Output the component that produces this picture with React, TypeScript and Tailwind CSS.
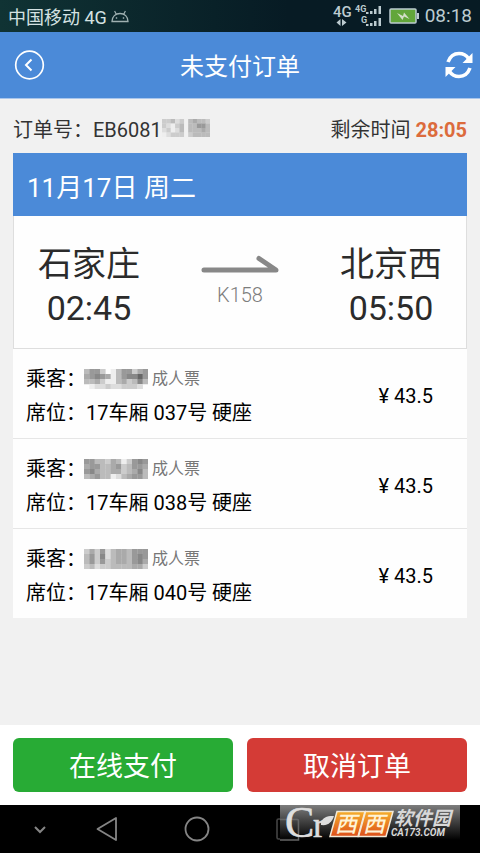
import React from 'react'

type Passenger = {
  seat: string
  price: string
  mask: string[]
}

const passengers: Passenger[] = [
  {
    seat: '17车厢 037号 硬座',
    price: '43.5',
    mask: ['b99cfeb99ca9', 'a989aeb98869', 'bbaceebacb8b', 'feddcddcccdf'],
  },
  {
    seat: '17车厢 038号 硬座',
    price: '43.5',
    mask: ['99bbcabec989', 'a99bba9cb99a', '98abbaacba8b', 'ba9bbedba99b'],
  },
  {
    seat: '17车厢 040号 硬座',
    price: '43.5',
    mask: ['cac9dbaab999', 'b9c8dbaab989', 'b9c9cbaab98a', 'cbdccbbbbaac'],
  },
]

// Each character is one grey block, 0 is black and f is left empty
const Mosaic = ({
  rows,
  className,
}: {
  rows: string[]
  className: string
}) => (
  <svg
    viewBox={`0 0 ${rows[0].length} ${rows.length}`}
    preserveAspectRatio="none"
    className={className}
    aria-hidden="true"
  >
    {rows.map((row, y) =>
      row
        .split('')
        .map((c, x) =>
          c === 'f' ? null : (
            <rect
              key={`${x}-${y}`}
              x={x}
              y={y}
              width="1.05"
              height="1.05"
              fill={`#${c}${c}${c}`}
            />
          )
        )
    )}
  </svg>
)

const StatusBar = () => (
  <div className="flex h-8 items-center justify-between bg-linear-to-r from-[#103334] to-[#071b24] to-60% px-2 text-[#d5e2e2]">
    <div className="flex items-center gap-1 pt-1 text-lg">
      <span>中国移动 4G</span>
      <svg viewBox="0 0 18 14" className="mb-1 h-3.5 w-4.5" fill="none" stroke="#9fb0b1">
        <path d="M1 12.5C1 7.5 4.5 4.5 9 4.5S17 7.5 17 12.5Z" strokeWidth="1.3" />
        <path d="M5.3 5.2 3.6 2M12.7 5.2 14.4 2" strokeWidth="1.2" />
        <path d="M5.5 8.3V9.8M12.5 8.3V9.8" strokeWidth="1.4" />
      </svg>
    </div>
    <div className="flex items-center gap-1.5 text-[#bccbd0]">
      <svg viewBox="0 0 50 24" className="h-6 w-[50px]" fill="#bccbd0">
        <text x="0" y="13" fontSize="15" fontWeight="500">
          4G
        </text>
        <path d="M3.5 18.5 7.5 15v7zM9 15v7l4.5-3.5z" />
        <text x="22" y="8" fontSize="9" fontWeight="700">
          4G
        </text>
        <text x="28" y="19" fontSize="9" fontWeight="700">
          G
        </text>
        <path d="M33 8h2.500v2H33zM37 7h2.500v3H37zM41 5h2.500v5H41zM45.500 2H48v8h-2.500z" />
        <path d="M33 20h2.500v2H33zM37 19h2.500v3H37zM41 17h2.500v5H41zM45.500 14H48v8h-2.500z" />
      </svg>
      <svg viewBox="0 0 30 16" className="h-4 w-[30px]">
        <rect x="1" y="1" width="26" height="14" rx="1" fill="#62a63a" stroke="#bccbd0" strokeWidth="1.5" />
        <path d="M28 5h2v6h-2z" fill="#bccbd0" />
        <path d="M8 5 14 8 15 4.5 20.5 11 15 8.5 13.5 12z" fill="#d3dfc9" />
      </svg>
      <span className="text-[19px] leading-6">08:18</span>
    </div>
  </div>
)

const Header = () => (
  <header className="grid grid-cols-[60px_1fr_60px] items-center border-b border-[#a9c6ec] bg-[#4b8ad8] py-[15px] text-white">
    <button type="button" aria-label="返回" className="pl-3.5">
      <svg viewBox="0 0 32 32" className="size-8" fill="none" stroke="currentColor">
        <circle cx="15.5" cy="16" r="13.8" strokeWidth="1.7" />
        <path d="m17.5 10.5-5.500 5.500 5.500 5.500" strokeWidth="2" />
      </svg>
    </button>
    <h1 className="pt-1 text-center text-2xl leading-8">未支付订单</h1>
    <button type="button" aria-label="刷新" className="flex justify-end pr-1.5">
      <svg viewBox="0 0 30 30" className="size-[30px]" fill="none" stroke="currentColor">
        <path d="M4 12C6 6.500 10 3.500 15 3.500c4 0 7.500 2 9.500 5" strokeWidth="3.600" />
        <path d="M28.500 3V13H18.500z" fill="currentColor" stroke="none" />
        <path d="M26 18C24 23.500 20 26.500 15 26.500c-4 0-7.500-2-9.500-5" strokeWidth="3.600" />
        <path d="M1.500 27V17h10z" fill="currentColor" stroke="none" />
      </svg>
    </button>
  </header>
)

const Station = ({ name, time }: { name: string; time: string }) => (
  <div className="flex flex-col items-center text-[34px] leading-11 text-[#2b2b2b]">
    <span>{name}</span>
    <time>{time}</time>
  </div>
)

const PassengerRow = ({ passenger }: { passenger: Passenger }) => (
  <li className="flex items-center justify-between border-b border-[#e6e6e6] pt-[13px] pr-[34px] pb-2 pl-[13px] text-xl text-black last:border-b-0">
    <div className="leading-[34px]">
      <div className="flex items-center">
        <span>乘客：</span>
        <Mosaic rows={passenger.mask} className="-ml-0.5 h-5 w-16" />
        <span className="ml-1 text-base leading-[34px] text-[#777]">成人票</span>
      </div>
      <div>席位：{passenger.seat}</div>
    </div>
    <span>¥ {passenger.price}</span>
  </li>
)

const Watermark = () => (
  <svg viewBox="0 0 180 35" className="absolute top-0 right-5 h-[35px] w-[180px] overflow-visible">
    <defs>
      <linearGradient id="shade" x1="0" y1="0" x2="0" y2="1">
        <stop offset="0" stopColor="#8b8b8b" />
        <stop offset="0.5" stopColor="#444" />
        <stop offset="1" stopColor="#000" />
      </linearGradient>
      <linearGradient id="orange" x1="0" y1="0" x2="0" y2="1">
        <stop offset="0" stopColor="#f6ae2c" />
        <stop offset="1" stopColor="#dd4f1a" />
      </linearGradient>
    </defs>
    <rect width="180" height="35" fill="url(#shade)" fillOpacity="0.9" />
    <path d="M0 14.5H17.5Q18.5 14.5 18.5 16V35H0" fill="none" stroke="#666" strokeWidth="1.5" />
    <g fill="#dedede" stroke="#dedede" strokeWidth="0.6" fontFamily="Liberation Serif, serif">
      <text x="5" y="32" fontSize="44">
        C
      </text>
      <text x="33" y="32" fontSize="36">
        r
      </text>
    </g>
    <path d="M41 17C44 11 49 11 54 11 52 17 48 21 41 20z" fill="#dedede" />
    <g stroke="#f3ead8" strokeWidth="1.5" fill="url(#orange)">
      <path d="M57 6.5H85L78 31.5H50z" />
      <path d="M85.500 6.500H113L106 31.500H78.500z" />
    </g>
    <g fill="#fff3d6" fontSize="22" fontWeight="500" fontStyle="italic">
      <text x="55" y="27">
        西
      </text>
      <text x="83" y="27">
        西
      </text>
    </g>
    <g fill="#d8d8d8" fontStyle="italic" fontWeight="700">
      <text x="114" y="20" fontSize="19">
        软件园
      </text>
      <text x="111" y="31" fontSize="10">
        CA173.COM
      </text>
    </g>
  </svg>
)

const NavBar = () => (
  <nav className="relative flex h-12 items-center bg-black text-[#858585]">
    <button type="button" aria-label="收起" className="ml-8">
      <svg viewBox="0 0 16 16" className="size-4" fill="none" stroke="currentColor" strokeWidth="2">
        <path d="m3 6 5 5 5-5" />
      </svg>
    </button>
    <button type="button" aria-label="后退" className="ml-12">
      <svg viewBox="0 0 24 26" className="h-[26px] w-6" fill="none" stroke="currentColor" strokeWidth="1.8">
        <path d="M1.5 13 20 2v22z" strokeLinejoin="round" />
      </svg>
    </button>
    <button type="button" aria-label="主页" className="ml-16">
      <svg viewBox="0 0 26 26" className="size-[26px]" fill="none" stroke="currentColor" strokeWidth="1.8">
        <circle cx="13" cy="13" r="11.5" />
      </svg>
    </button>
    <button type="button" aria-label="最近任务" className="ml-16">
      <svg viewBox="0 0 26 26" className="size-[26px]" fill="none" stroke="#444" strokeWidth="1.6">
        <rect x="3" y="3" width="21" height="20" rx="1.5" />
      </svg>
    </button>
    <Watermark />
  </nav>
)

const App = () => {
  return (
    <div className="flex min-h-screen flex-col bg-[#f1f1f1] font-['Roboto','Noto_Sans_CJK_SC',sans-serif]">
      <StatusBar />
      <Header />
      <main className="flex-1 px-[13px]">
        <div className="flex items-center justify-between pt-4 pb-2 text-xl leading-[30px] text-[#333]">
          <div className="flex items-center">
            <span>订单号：EB6081</span>
            <Mosaic
              rows={['ccbdcfbabbc', 'cdecbfbb99b', 'dcedbfbbbab', 'edcccfcbbbb']}
              className="mb-1 h-[18px] w-12"
            />
          </div>
          <div>
            剩余时间 <span className="font-bold text-[#dc6b3c]">28:05</span>
          </div>
        </div>
        <h2 className="bg-[#4b8ad8] px-3.5 pt-4 pb-2 text-[26px] leading-[39px] text-white">
          11月17日 周二
        </h2>
        <section className="flex justify-between border border-t-0 border-[#dedede] bg-[#fefefe] px-6 pt-[26px] pb-[18px]">
          <Station name="石家庄" time="02:45" />
          <div className="flex flex-col items-center pt-3 text-[#7d7d7d]">
            <svg viewBox="0 0 78 20" className="h-5 w-[78px]" fill="none" stroke="#888" strokeWidth="5">
              <path d="M3 16H75L58 4.5" strokeLinecap="round" strokeLinejoin="round" />
            </svg>
            <span className="text-xl leading-[42px] font-light">K158</span>
          </div>
          <Station name="北京西" time="05:50" />
        </section>
        <ul className="bg-[#fefefe]">
          {passengers.map((passenger) => (
            <PassengerRow key={passenger.seat} passenger={passenger} />
          ))}
        </ul>
      </main>
      <footer className="grid grid-cols-2 gap-3.5 bg-white p-[13px] text-[27px] leading-[50px] text-white">
        <button type="button" className="rounded-md bg-[#28ab35] pt-1">
          在线支付
        </button>
        <button type="button" className="rounded-md bg-[#d43b36] pt-1">
          取消订单
        </button>
      </footer>
      <NavBar />
    </div>
  )
}

export default App
